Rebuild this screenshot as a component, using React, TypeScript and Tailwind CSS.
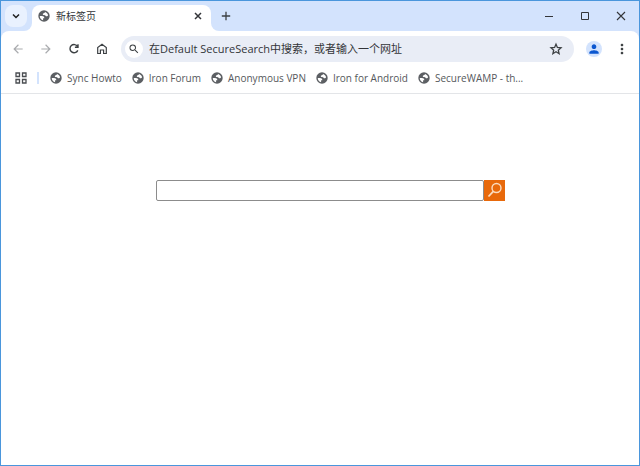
import React, { useState } from 'react';
import { MdArrowBack, MdArrowForward, MdMoreVert, MdPerson, MdSearch } from 'react-icons/md';

const BOOKMARKS = ['Sync Howto', 'Iron Forum', 'Anonymous VPN', 'Iron for Android', 'SecureWAMP - th...'];

const GlobeIcon: React.FC = () => (
  <svg viewBox="0 0 24 24" className="w-3 h-3 shrink-0">
    <circle cx="12" cy="12" r="11.4" fill="#5c5f63" />
    <path
      d="M14 4c3 .7 5.500 3.200 6.100 6.400-.7 1.600-1.500 2.300-2.900 2.300-2 0-2-1.900-3.600-2.200-1.600-.3-3 .2-3.800-1.300-.7-1.500.3-2.400 1.600-2.900 1.300-.4 2.600-.9 2.600-2.300z"
      fill="#ffffff"
    />
    <path d="M3.500 12H8c2.800 0 4.700 1.700 4.700 4.300h-2.500v4.200C6.500 19.700 3.500 16.200 3.500 12z" fill="#ffffff" />
  </svg>
);

const TabStrip: React.FC = () => (
  <header className="flex items-end h-[30px] pl-1 bg-[#d3e3fd]">
    <button
      aria-label="搜索标签页"
      className="flex items-center justify-center w-[22px] h-[22px] mb-1 rounded-lg bg-[#e9f1fe]"
    >
      <svg viewBox="0 0 10 10" className="w-[10px] h-[10px]" fill="none" stroke="#1f1f1f" strokeWidth="1.5">
        <path d="M2 3.5 5 6.5 8 3.5" />
      </svg>
    </button>

    <div className="relative flex items-center w-[179px] h-[26px] ml-[5px] px-[6px] pb-1 rounded-t-lg bg-white">
      <span className="absolute bottom-0 right-full w-2 h-2 overflow-hidden">
        <span className="block w-2 h-2 rounded-br-lg shadow-[4px_4px_0_4px_#ffffff]" />
      </span>
      <span className="absolute bottom-0 left-full w-2 h-2 overflow-hidden">
        <span className="block w-2 h-2 rounded-bl-lg shadow-[-4px_4px_0_4px_#ffffff]" />
      </span>
      <GlobeIcon />
      <span className="flex-1 ml-[6px] text-[10px] leading-4 text-[#333539]">新标签页</span>
      <button aria-label="关闭标签页" className="mr-[2px]">
        <svg viewBox="0 0 10 10" className="w-[10px] h-[10px]" fill="none" stroke="#333539" strokeWidth="1.5">
          <path d="m2 2 6 6M8 2 2 8" />
        </svg>
      </button>
    </div>

    <button aria-label="新建标签页" className="flex items-center justify-center w-4 h-4 mb-[7px] ml-[7px]">
      <svg viewBox="0 0 10 10" className="w-[10px] h-[10px]" fill="none" stroke="#3c4043" strokeWidth="1.3">
        <path d="M5 .8v8.4M.8 5h8.4" />
      </svg>
    </button>

    <div className="flex ml-auto h-full text-[#333539]">
      <button aria-label="最小化" className="flex items-center justify-center w-9">
        <svg viewBox="0 0 10 10" className="w-[10px] h-[10px]" fill="none" stroke="currentColor">
          <path d="M1 5.5h8" />
        </svg>
      </button>
      <button aria-label="最大化" className="flex items-center justify-center w-9">
        <svg viewBox="0 0 10 10" className="w-[10px] h-[10px]" fill="none" stroke="currentColor">
          <path d="M1.5 1.5h7v7h-7z" />
        </svg>
      </button>
      <button aria-label="关闭" className="flex items-center justify-center w-9">
        <svg viewBox="0 0 10 10" className="w-[10px] h-[10px]" fill="none" stroke="currentColor" strokeWidth="1.1">
          <path d="m1 1 8 8M9 1 1 9" />
        </svg>
      </button>
    </div>
  </header>
);

const Toolbar: React.FC = () => {
  const [address, setAddress] = useState('');

  return (
    <div className="flex items-center h-9 pl-[10px] pr-[9px] rounded-t-lg bg-white text-[#3c4043]">
      <nav className="flex items-center gap-[14px]">
        <button aria-label="后退" className="text-[#a9abae]">
          <MdArrowBack className="w-[14px] h-[14px]" />
        </button>
        <button aria-label="前进" className="text-[#a9abae]">
          <MdArrowForward className="w-[14px] h-[14px]" />
        </button>
        <button aria-label="重新加载">
          <svg viewBox="0 0 14 14" className="w-[14px] h-[14px]" fill="none" stroke="currentColor" strokeWidth="1.4">
            <path d="M10.6 4.500A4.100 4.100 0 1 0 10.800 8.400M11 2.200v3.100H7.900" />
          </svg>
        </button>
        <button aria-label="主页">
          <svg viewBox="0 0 14 14" className="w-[14px] h-[14px]" fill="none" stroke="currentColor" strokeWidth="1.2">
            <path d="M2.700 11.500V5.500L7 2.200l4.300 3.300v6H8.600V8H5.400v3.500z" />
          </svg>
        </button>
      </nav>

      <div className="flex flex-1 items-center h-[26px] ml-3 pl-1 pr-[11px] rounded-full bg-[#e9edf6]">
        <span className="flex items-center justify-center w-[18px] h-[18px] rounded-full bg-white">
          <MdSearch className="w-3 h-3" />
        </span>
        <input
          type="text"
          aria-label="地址和搜索栏"
          value={address}
          onChange={(e) => setAddress(e.target.value)}
          placeholder="在Default SecureSearch中搜索，或者输入一个网址"
          className="flex-1 min-w-0 ml-[6px] text-[11px] leading-4 bg-transparent outline-none text-[#1f1f1f] placeholder:text-[#333539]"
        />
        <button aria-label="为此标签页添加书签">
          <svg viewBox="0 0 14 14" className="w-[14px] h-[14px]" fill="none" stroke="currentColor" strokeWidth="1.3">
            <path d="m7 2.200 1.400 3.300 3.600.3-2.700 2.400.8 3.500L7 9.800l-3.100 1.900.8-3.500L2 5.800l3.600-.3z" />
          </svg>
        </button>
      </div>

      <button
        aria-label="个人资料"
        className="flex items-center justify-center w-4 h-4 ml-3 rounded-full bg-[#d3e3fd] text-[#0b57d0]"
      >
        <MdPerson className="w-[14px] h-[14px]" />
      </button>
      <button aria-label="菜单" className="ml-3">
        <MdMoreVert className="w-4 h-4" />
      </button>
    </div>
  );
};

const BookmarksBar: React.FC = () => (
  <nav className="flex items-center h-[27px] pl-[14px] pb-1 border-b border-[#e3e5e8] bg-white text-[#55585c]">
    <button aria-label="应用">
      <svg viewBox="0 0 12 12" className="w-3 h-3" fill="none" stroke="#4a4d51" strokeWidth="1.3">
        <path d="M1 1h3.500v3.500H1zM7.500 1H11v3.500H7.500zM1 7.500h3.500V11H1zM7.500 7.500H11V11H7.500z" />
      </svg>
    </button>
    <span className="w-[2px] h-3 ml-[10px] mr-[11px] bg-[#d3e3fd]" />
    <div className="flex gap-[10px]">
      {BOOKMARKS.map((title) => (
        <a key={title} href="#" className="flex items-center gap-[5px] text-[10px] leading-4 whitespace-nowrap">
          <GlobeIcon />
          {title}
        </a>
      ))}
    </div>
  </nav>
);

const SearchPage: React.FC = () => {
  const [query, setQuery] = useState('');

  return (
    <main className="flex-1 pt-[86px] pl-5">
      <form className="flex w-full max-w-[349px] mx-auto" onSubmit={(e) => e.preventDefault()}>
        <input
          type="text"
          aria-label="搜索"
          value={query}
          onChange={(e) => setQuery(e.target.value)}
          className="flex-1 min-w-0 h-[21px] px-1 text-xs border border-[#8c8c8c] rounded-xs bg-white outline-none"
        />
        <button aria-label="搜索" className="flex items-center justify-center w-[21px] h-[21px] bg-[#e8690b]">
          <svg viewBox="0 0 21 21" className="w-[21px] h-[21px]" fill="none" stroke="#fbdcc0">
            <circle cx="12.5" cy="8" r="4.5" strokeWidth="1.4" />
            <path d="M9.3 11.3 4.5 16.5" strokeWidth="1.8" />
          </svg>
        </button>
      </form>
    </main>
  );
};

const App: React.FC = () => (
  <div className="flex flex-col min-h-screen border border-[#4a96dc] bg-white [font-family:'Open_Sans','Noto_Sans_CJK_SC',sans-serif]">
    <TabStrip />
    <div className="bg-[#d3e3fd]">
      <Toolbar />
    </div>
    <BookmarksBar />
    <SearchPage />
  </div>
);

export default App;
